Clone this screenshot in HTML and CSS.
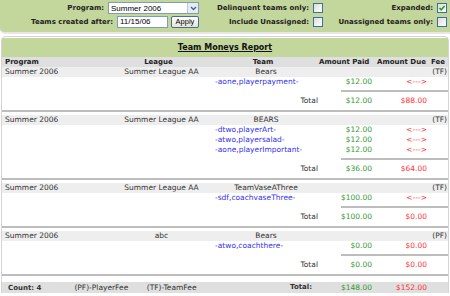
FILE: index.html
```html
<!DOCTYPE html>
<html lang="en">
<head>
    <meta charset="UTF-8">
    <title>Team Moneys Report</title>
    <link rel="stylesheet" href="styles.css">
</head>
<body>

    <div class="filters">
        <div class="fcell">
            <span class="flabel">Program:</span>
            <span class="select">Summer 2006<span class="arrow"><svg width="7" height="5" viewBox="0 0 7 5"><path d="M1 1 L3.5 3.5 L6 1" fill="none" stroke="#4d6185" stroke-width="1.4"/></svg></span></span>
        </div>
        <div class="fcell">
            <span class="flabel">Delinquent teams only:</span>
            <span class="cb"></span>
        </div>
        <div class="fcell">
            <span class="flabel">Expanded:</span>
            <span class="cb"><svg width="8" height="8" viewBox="0 0 8 8"><path d="M1.5 4 L3.2 5.8 L6.6 2" fill="none" stroke="#21a121" stroke-width="1.6"/></svg></span>
        </div>
        <div class="fcell">
            <span class="flabel">Teams created after:</span>
            <span class="datebox">11/15/06</span>
            <span class="btn">Apply</span>
        </div>
        <div class="fcell">
            <span class="flabel">Include Unassigned:</span>
            <span class="cb"></span>
        </div>
        <div class="fcell">
            <span class="flabel">Unassigned teams only:</span>
            <span class="cb"></span>
        </div>
    </div>

    <div class="report">
        <div class="title"><span>Team Moneys Report</span></div>

        <div class="cols head">
            <div class="c-prog">Program</div>
            <div class="c-league">League</div>
            <div class="c-team">Team</div>
            <div class="c-paid">Amount Paid</div>
            <div class="c-due">Amount Due</div>
            <div class="c-fee">Fee</div>
        </div>

        <!-- group 1 -->
        <div class="group first">
            <div class="cols grow">
                <div class="c-prog">Summer 2006</div>
                <div class="c-league">Summer League AA</div>
                <div class="c-team">Bears</div>
                <div></div><div></div>
                <div class="c-fee">(TF)</div>
            </div>
            <div class="cols line">
                <div></div><div></div>
                <div class="c-link">-aone,playerpayment-</div>
                <div class="amt paid">$12.00</div>
                <div class="amt due">&lt;---&gt;</div>
            </div>
            <div class="sep"></div>
            <div class="cols line">
                <div></div><div></div>
                <div class="c-total">Total</div>
                <div class="amt paid">$12.00</div>
                <div class="amt due">$88.00</div>
            </div>
        </div>

        <!-- group 2 -->
        <div class="group">
            <div class="cols grow">
                <div class="c-prog">Summer 2006</div>
                <div class="c-league">Summer League AA</div>
                <div class="c-team">BEARS</div>
                <div></div><div></div>
                <div class="c-fee">(TF)</div>
            </div>
            <div class="cols line">
                <div></div><div></div>
                <div class="c-link">-dtwo,playerArt-</div>
                <div class="amt paid">$12.00</div>
                <div class="amt due">&lt;---&gt;</div>
            </div>
            <div class="cols line">
                <div></div><div></div>
                <div class="c-link">-atwo,playersalad-</div>
                <div class="amt paid">$12.00</div>
                <div class="amt due">&lt;---&gt;</div>
            </div>
            <div class="cols line">
                <div></div><div></div>
                <div class="c-link">-aone,playerImportant-</div>
                <div class="amt paid">$12.00</div>
                <div class="amt due">&lt;---&gt;</div>
            </div>
            <div class="sep"></div>
            <div class="cols line">
                <div></div><div></div>
                <div class="c-total">Total</div>
                <div class="amt paid">$36.00</div>
                <div class="amt due">$64.00</div>
            </div>
        </div>

        <!-- group 3 -->
        <div class="group">
            <div class="cols grow">
                <div class="c-prog">Summer 2006</div>
                <div class="c-league">Summer League AA</div>
                <div class="c-team">TeamVaseAThree</div>
                <div></div><div></div>
                <div class="c-fee">(TF)</div>
            </div>
            <div class="cols line">
                <div></div><div></div>
                <div class="c-link">-sdf,coachvaseThree-</div>
                <div class="amt paid">$100.00</div>
                <div class="amt due">&lt;---&gt;</div>
            </div>
            <div class="sep"></div>
            <div class="cols line">
                <div></div><div></div>
                <div class="c-total">Total</div>
                <div class="amt paid">$100.00</div>
                <div class="amt due">$0.00</div>
            </div>
        </div>

        <!-- group 4 -->
        <div class="group">
            <div class="cols grow">
                <div class="c-prog">Summer 2006</div>
                <div class="c-league">abc</div>
                <div class="c-team">Bears</div>
                <div></div><div></div>
                <div class="c-fee">(PF)</div>
            </div>
            <div class="cols line">
                <div></div><div></div>
                <div class="c-link">-atwo,coachthere-</div>
                <div class="amt paid">$0.00</div>
                <div class="amt due">$0.00</div>
            </div>
            <div class="sep"></div>
            <div class="cols line">
                <div></div><div></div>
                <div class="c-total">Total</div>
                <div class="amt paid">$0.00</div>
                <div class="amt due">$0.00</div>
            </div>
        </div>

        <div class="cols foot">
            <div class="legend">
                <span class="count">Count: 4</span>
                <span class="pf">(PF)-PlayerFee</span>
                <span>(TF)-TeamFee</span>
            </div>
            <div class="c-total grand">Total:</div>
            <div class="amt paid">$148.00</div>
            <div class="amt due">$152.00</div>
        </div>
    </div>

</body>
</html>
```

FILE: styles.css
```css
body {
    margin: 0;
    padding: 0;
    font-family: "DejaVu Sans", Verdana, sans-serif;
    font-size: 7.5px;
    color: #333;
    background-color: #ffffff;
}

/* filter panel */
.filters {
    display: grid;
    grid-template-columns: 199px 124px 124px;
    grid-auto-rows: 12px;
    row-gap: 2px;
    padding: 2px 0 4px 0;
    background-color: #c3d69b;
    border-bottom: 2px solid #e6e6e6;
    border-radius: 0 0 0 5px;
}
.fcell {
    display: flex;
    align-items: center;
    justify-content: flex-end;
    gap: 3px;
}
.flabel {
    font-weight: bold;
    font-size: 7px;
    color: #222;
    margin-right: 1px;
}
.select {
    display: flex;
    align-items: center;
    justify-content: space-between;
    width: 87px;
    height: 10px;
    padding-left: 2px;
    border: 1px solid #7f9db9;
    background-color: #fff;
    color: #000;
    font-family: "Liberation Sans", Arial, sans-serif;
    font-size: 8px;
}
.arrow {
    display: flex;
    align-items: center;
    justify-content: center;
    width: 10px;
    height: 10px;
    background-color: #e6ecf7;
    border-left: 1px solid #b9c7de;
}
.datebox {
    width: 47px;
    height: 10px;
    line-height: 10px;
    padding-left: 2px;
    border: 1px solid #7f9db9;
    background-color: #fff;
    color: #000;
    font-family: "Liberation Sans", Arial, sans-serif;
    font-size: 8px;
}
.btn {
    width: 26px;
    height: 10px;
    line-height: 10px;
    text-align: center;
    border: 1px solid #4a6a9a;
    border-radius: 2px;
    background: linear-gradient(#ffffff, #e6e3d6);
    color: #000;
    font-family: "Liberation Sans", Arial, sans-serif;
    font-size: 7.5px;
}
.cb {
    display: flex;
    align-items: center;
    justify-content: center;
    width: 8px;
    height: 8px;
    border: 1px solid #3a6ea5;
    background: linear-gradient(135deg, #dcdcd5, #ffffff);
}

/* report */
.report {
    margin: 2px 1px 0 1px;
    border: 1px solid #d4d4d4;
    border-bottom: none;
    border-radius: 5px 5px 0 0;
    padding-top: 1px;
}
.title {
    height: 19px;
    line-height: 19px;
    text-align: center;
    background-color: #c3d69b;
    color: #111;
    font-weight: bold;
    font-size: 8px;
    text-decoration: underline;
}
.cols {
    display: grid;
    grid-template-columns: 108px 103px 106px 55px 55px 1fr;
    height: 10px;
    line-height: 10px;
    white-space: nowrap;
}
.head {
    background-color: #dfdfdf;
    font-weight: bold;
    font-size: 7px;
    color: #222;
}
.head .c-league,
.head .c-team,
.head .c-paid {
    padding-right: 6px;
}
.head .c-paid,
.head .c-due,
.head .c-fee {
    text-align: center;
}
.c-prog {
    padding-left: 3px;
}
.c-league,
.c-team {
    text-align: center;
}
.c-fee {
    text-align: right;
    padding-right: 1px;
}
.c-link {
    padding-left: 2px;
    color: #3333ee;
}
.c-total {
    text-align: right;
    padding-right: 1px;
}
.amt {
    text-align: right;
    padding-right: 2px;
}
.paid {
    color: #339933;
}
.due {
    color: #ff3333;
}

.group {
    border-bottom: 2px solid #bdbdbd;
    padding-bottom: 4px;
    padding-top: 3px;
}
.group.first {
    padding-top: 0;
}
.grow {
    background-color: #eeeeee;
}
.sep {
    margin: 3px 0 4px 339px;
    border-top: 2px solid #bdbdbd;
}

.foot {
    margin-top: 6px;
    height: 11px;
    line-height: 11px;
    background-color: #dfdfdf;
}
.legend {
    grid-column: 1 / 3;
    padding-left: 6px;
}
.count {
    display: inline-block;
    width: 64px;
    font-weight: bold;
    font-size: 7px;
}
.pf {
    display: inline-block;
    width: 70px;
}
.grand {
    font-weight: bold;
    font-size: 7px;
    padding-right: 7px;
}
```
